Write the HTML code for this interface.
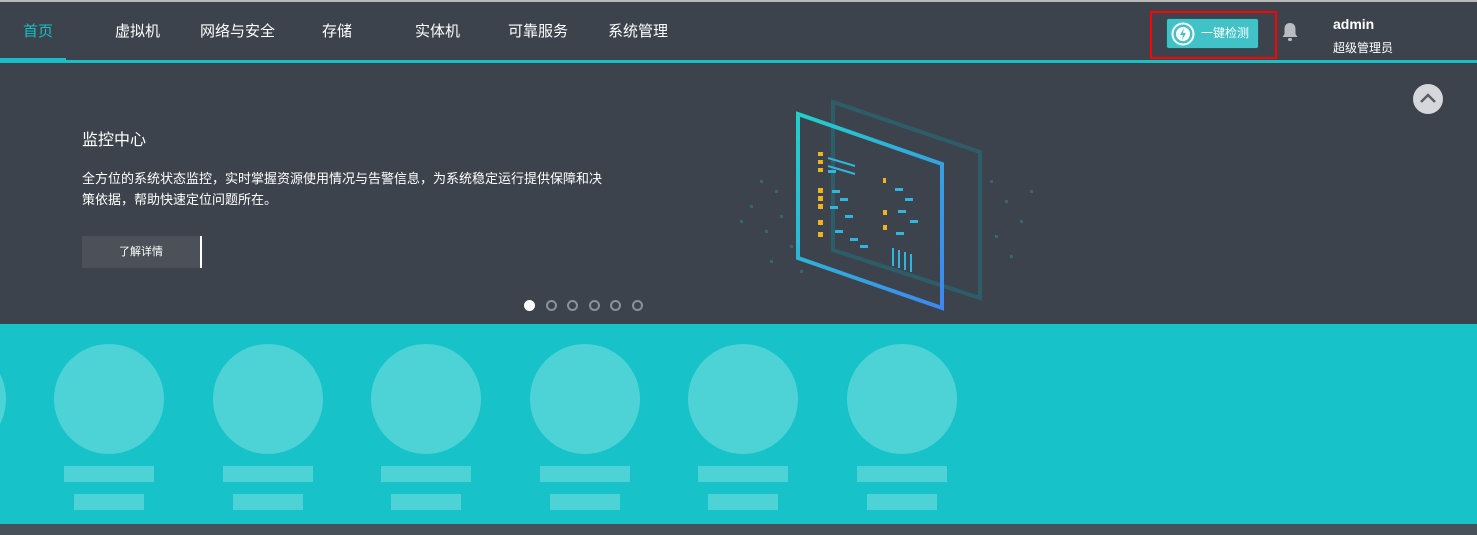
<!DOCTYPE html>
<html><head><meta charset="utf-8"><style>
*{margin:0;padding:0;box-sizing:border-box}
body{width:1477px;height:535px;background:#3d434c;overflow:hidden;font-family:"Liberation Sans","Noto Sans CJK SC",sans-serif;position:relative}
.top{position:absolute;left:0;top:0;width:1477px;height:2px;background:#b8b8b8}
.nav{position:absolute;top:0;left:0;width:1477px;height:63px;background:#3c434c}
.nav .line{position:absolute;left:0;top:60px;width:1477px;height:3px;background:#17c0c6}
.nav .act{position:absolute;left:0;top:58px;width:66px;height:5px;background:#17c0c6}
.nav a{position:absolute;top:22px;font-size:15px;color:#fff;text-decoration:none;line-height:20px}
.btn{position:absolute;left:1166px;top:18px;width:93px;height:31px;background:#41c2c6;border-radius:3px;border:1px solid #2a5560;color:#fff;font-size:12px;line-height:29px;padding-left:34px}
.red{position:absolute;left:1150px;top:11px;width:127px;height:48px;border:2px solid #f00}
.ic{position:absolute;left:1171px;top:22px;width:24px;height:24px}
.bell{position:absolute;left:1281px;top:22px}
.u1{position:absolute;left:1333px;top:16px;color:#fff;font-weight:bold;font-size:14px}
.u2{position:absolute;left:1333px;top:39px;color:#fff;font-size:12px}
.up{position:absolute;left:1413px;top:84px;width:30px;height:30px;border-radius:50%;background:#d5d7da}
.h1{position:absolute;left:82px;top:126px;color:#fff;font-size:16px}
.p{position:absolute;left:82px;top:168px;color:#fff;font-size:13px;line-height:21px;width:530px}
.more{position:absolute;left:82px;top:236px;width:120px;height:32px;background:#4b5059;border-right:2px solid #fff;color:#fff;font-size:11px;text-align:center;line-height:32px}
.dots{position:absolute;left:524px;top:300px}
.dots span{position:absolute;top:0;width:11px;height:11px;border-radius:50%;border:2px solid #8c9097}
.band{position:absolute;left:0;top:324px;width:1477px;height:200px;background:#17c2c8;overflow:hidden}
.c{position:absolute;top:20px;width:110px;height:110px;border-radius:50%;background:#4dd3d6}
.b1{position:absolute;top:142px;width:90px;height:16px;background:#4dd3d6}
.b2{position:absolute;top:170px;width:70px;height:16px;background:#4dd3d6}
.bot{position:absolute;left:0;top:524px;width:1477px;height:11px;background:#48505a}
</style></head><body>
<div class="nav"><div class="line"></div><div class="act"></div>
<a style="left:23px;color:#17c0c6">首页</a>
<a style="left:115px">虚拟机</a>
<a style="left:200px">网络与安全</a>
<a style="left:322px">存储</a>
<a style="left:415px">实体机</a>
<a style="left:508px">可靠服务</a>
<a style="left:608px">系统管理</a>
</div>
<div class="top"></div>
<div class="red"></div>
<div class="btn">一键检测</div>
<svg class="ic" viewBox="0 0 24 24"><circle cx="12" cy="12" r="10.5" fill="none" stroke="#fff" stroke-width="2"/><circle cx="12" cy="12" r="7" fill="#fff"/><path d="M13 6 L9 13 H12 L11 18 L15 11 H12 Z" fill="#41c2c6"/></svg>
<svg class="bell" width="18" height="20" viewBox="0 0 18 20"><path d="M9 1 C5 1 3.5 4 3.5 7 V12 L1.5 15 H16.5 L14.5 12 V7 C14.5 4 13 1 9 1Z" fill="#b9bcc0"/><rect x="7" y="16" width="4" height="3" rx="1.5" fill="#b9bcc0"/></svg>
<div class="u1">admin</div><div class="u2">超级管理员</div>
<div class="up"><svg width="30" height="30" viewBox="0 0 30 30"><path d="M8 18 L15 11 L22 18" fill="none" stroke="#5a5f66" stroke-width="2.5"/></svg></div>
<div class="h1">监控中心</div>
<div class="p">全方位的系统状态监控，实时掌握资源使用情况与告警信息，为系统稳定运行提供保障和决策依据，帮助快速定位问题所在。</div>
<div class="more">了解详情</div>
<div class="dots"><span style="left:0;background:#fff;border-color:#fff"></span><span style="left:22px"></span><span style="left:43px"></span><span style="left:65px"></span><span style="left:86px"></span><span style="left:108px"></span></div>
<svg style="position:absolute;left:720px;top:70px" width="350" height="250" viewBox="0 0 350 250">
<g fill="#2f7f93" opacity=".6">
<rect x="40" y="110" width="3" height="3"/><rect x="55" y="120" width="3" height="3"/><rect x="30" y="135" width="3" height="3"/><rect x="60" y="145" width="3" height="3"/><rect x="45" y="160" width="3" height="3"/><rect x="70" y="175" width="3" height="3"/><rect x="50" y="190" width="3" height="3"/><rect x="80" y="200" width="3" height="3"/><rect x="20" y="150" width="3" height="3"/><rect x="270" y="110" width="3" height="3"/><rect x="285" y="130" width="3" height="3"/><rect x="300" y="150" width="3" height="3"/><rect x="275" y="165" width="3" height="3"/><rect x="290" y="185" width="3" height="3"/><rect x="310" y="120" width="3" height="3"/>
</g>
<path d="M113 32 L260 82 L260 228 L113 180 Z" fill="none" stroke="#2e5d6a" stroke-width="4"/>
<path d="M78 44 L222 94 L222 238 L78 188 Z" fill="none" stroke="url(#g)" stroke-width="4"/>
<defs><linearGradient id="g" x1="0" y1="0" x2="1" y2="1"><stop offset="0" stop-color="#22d0c8"/><stop offset="1" stop-color="#3f86f0"/></linearGradient></defs>
<g fill="#f0b31c"><rect x="98" y="82" width="5" height="4"/><rect x="98" y="90" width="5" height="4"/><rect x="98" y="98" width="5" height="4"/><rect x="98" y="118" width="5" height="5"/><rect x="98" y="126" width="5" height="5"/><rect x="98" y="134" width="5" height="5"/><rect x="98" y="150" width="5" height="5"/><rect x="98" y="162" width="5" height="5"/><rect x="163" y="108" width="3" height="5"/><rect x="163" y="140" width="4" height="5"/><rect x="163" y="155" width="4" height="5"/></g>
<g fill="#2fb5de"><rect x="108" y="100" width="8" height="3"/><rect x="112" y="120" width="8" height="3"/><rect x="120" y="128" width="8" height="3"/><rect x="110" y="136" width="8" height="3"/><rect x="125" y="145" width="8" height="3"/><rect x="115" y="160" width="8" height="3"/><rect x="130" y="168" width="8" height="3"/><rect x="140" y="175" width="8" height="3"/><rect x="175" y="118" width="8" height="3"/><rect x="185" y="128" width="8" height="3"/><rect x="178" y="140" width="8" height="3"/><rect x="190" y="150" width="8" height="3"/><rect x="176" y="162" width="8" height="3"/><rect x="172" y="178" width="2" height="18"/><rect x="178" y="180" width="2" height="18"/><rect x="184" y="182" width="2" height="18"/><rect x="190" y="184" width="2" height="18"/><path d="M108 88 L135 96 M108 96 L135 104" stroke="#2fb5de" stroke-width="2"/></g>
</svg>
<div class="band">
<div class="c" style="left:-104px"></div>
<div class="c" style="left:54px"></div><div class="b1" style="left:64px"></div><div class="b2" style="left:74px"></div>
<div class="c" style="left:213px"></div><div class="b1" style="left:223px"></div><div class="b2" style="left:233px"></div>
<div class="c" style="left:371px"></div><div class="b1" style="left:381px"></div><div class="b2" style="left:391px"></div>
<div class="c" style="left:530px"></div><div class="b1" style="left:540px"></div><div class="b2" style="left:550px"></div>
<div class="c" style="left:688px"></div><div class="b1" style="left:698px"></div><div class="b2" style="left:708px"></div>
<div class="c" style="left:847px"></div><div class="b1" style="left:857px"></div><div class="b2" style="left:867px"></div>
</div>
<div class="bot"></div>
</body></html>
